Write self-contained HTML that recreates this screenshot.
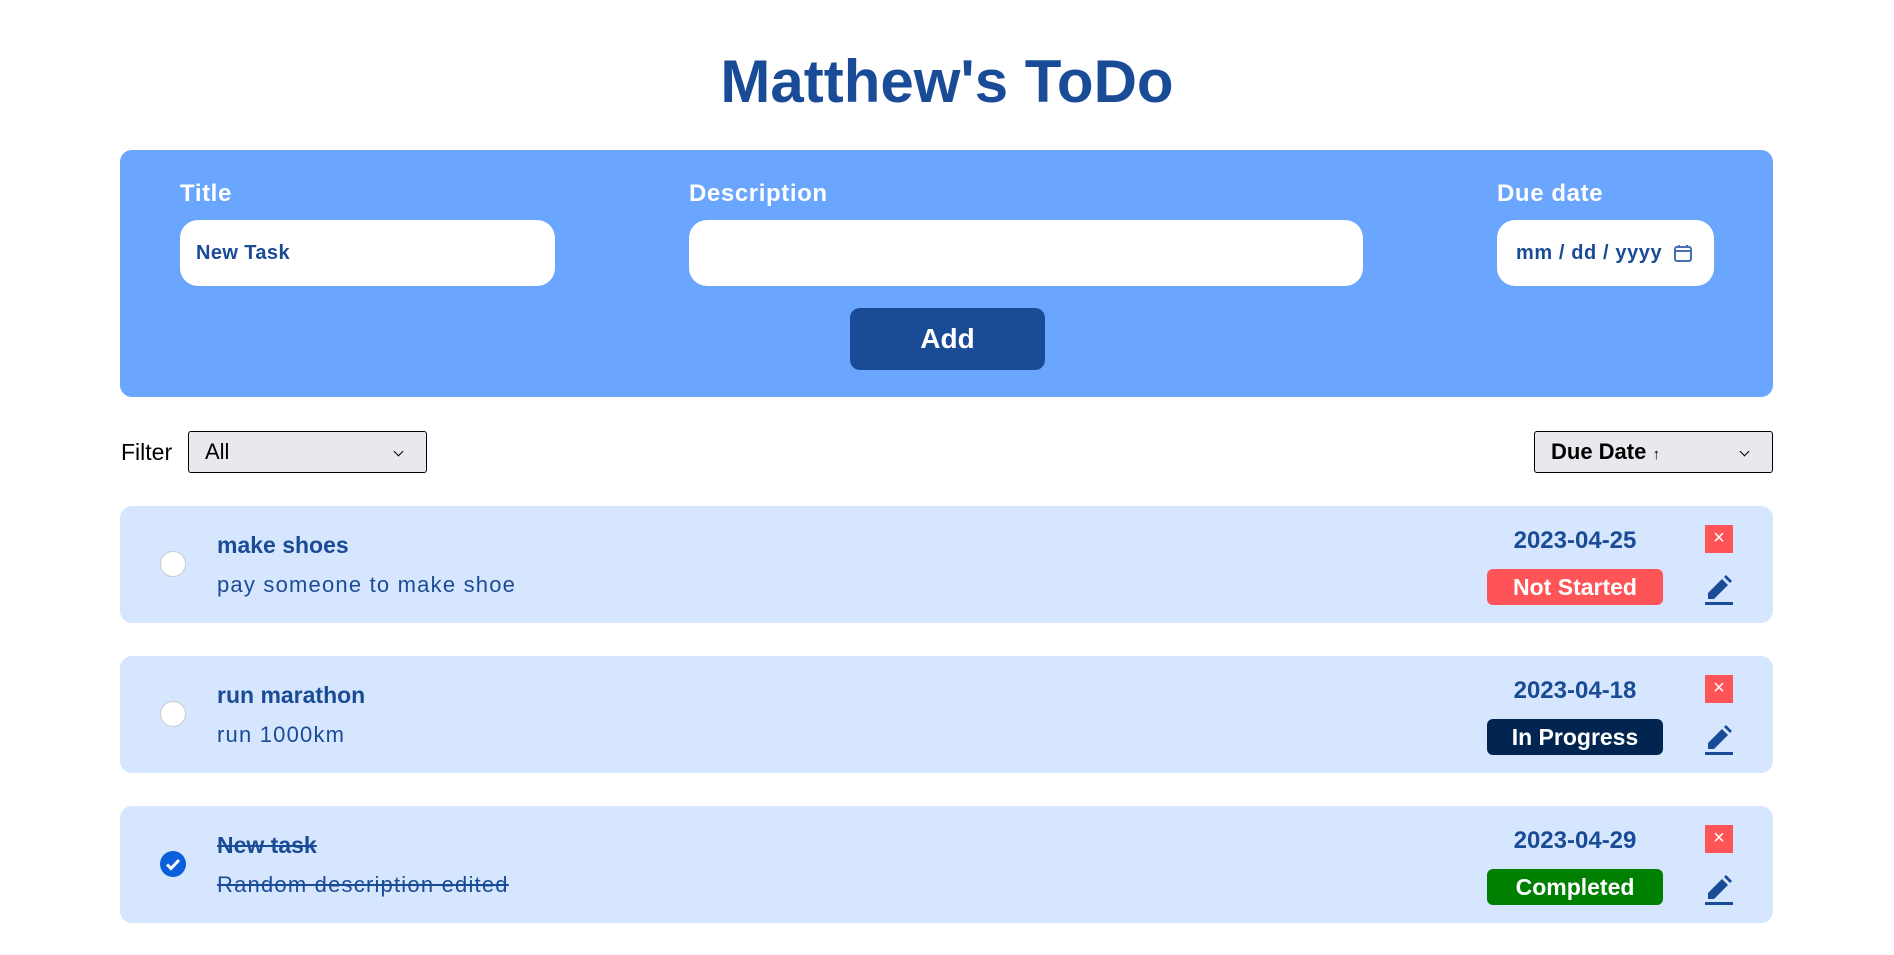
<!DOCTYPE html>
<html><head><meta charset="utf-8"><style>
*{box-sizing:border-box;margin:0;padding:0}
body{width:1894px;height:955px;background:#fff;font-family:"Liberation Sans",sans-serif;position:relative;overflow:hidden}
.abs{position:absolute}
h1{position:absolute;left:0;width:1894px;top:47px;text-align:center;font-size:60px;font-weight:bold;color:#1a4b96}
.panel{left:120px;top:150px;width:1653px;height:247px;background:#6aa5fe;border-radius:12px}
.lbl{color:#fff;font-weight:bold;font-size:24px;top:180px;letter-spacing:0.6px}
.inp{background:#fff;border-radius:18px;top:220px;height:66px;color:#1a4b96;font-size:20px;font-weight:bold;line-height:66px;padding-left:16px;letter-spacing:0.4px}
.btn{left:850px;top:308px;width:195px;height:62px;background:#1a4b96;border-radius:10px;color:#fff;font-size:28px;font-weight:bold;text-align:center;line-height:62px}
.sel{top:431px;height:42px;background:#e9e8ed;border:1px solid #000;border-radius:3px;font-size:22px;line-height:40px;padding-left:16px;color:#000}
.sel:after{content:"";position:absolute;right:24px;top:16px;width:6px;height:6px;border-right:1.5px solid #000;border-bottom:1.5px solid #000;transform:rotate(45deg)}
.card{left:120px;width:1653px;height:117px;background:#d6e6fe;border-radius:12px}
.chk{left:40px;top:45px;width:26px;height:26px;border-radius:50%;background:#fff;border:1px solid #ccc}
.t{left:97px;top:26px;font-size:23px;font-weight:bold;color:#1a4b96}
.d{left:97px;top:66px;font-size:22px;color:#1a4b96;letter-spacing:1.2px}
.date{left:1367px;width:176px;text-align:center;top:21px;font-size:24px;font-weight:bold;color:#1a4b96}
.badge{left:1367px;width:176px;top:63px;height:36px;border-radius:6px;color:#fff;font-size:23px;font-weight:bold;text-align:center;line-height:36px}
.x{left:1585px;top:19px;width:28px;height:28px;background:#ff5457;color:#fff;font-size:20px;text-align:center;line-height:27px}
.ed{left:1585px;top:69px}
.strike{text-decoration:line-through}
</style></head><body>
<h1>Matthew's ToDo</h1>
<div class="abs panel"></div>
<div class="abs lbl" style="left:180px">Title</div>
<div class="abs lbl" style="left:689px">Description</div>
<div class="abs lbl" style="left:1497px">Due date</div>
<div class="abs inp" style="left:180px;width:375px">New Task</div>
<div class="abs inp" style="left:689px;width:674px"></div>
<div class="abs inp" style="left:1497px;width:217px;padding-left:19px;letter-spacing:0.6px">mm / dd / yyyy
<svg class="abs" style="left:176px;top:23px" width="20" height="20" viewBox="0 0 20 20"><rect x="2" y="4" width="16" height="14" rx="2" fill="none" stroke="#4a6fae" stroke-width="2"/><line x1="2" y1="8" x2="18" y2="8" stroke="#4a6fae" stroke-width="2"/><line x1="6" y1="2" x2="6" y2="5" stroke="#4a6fae" stroke-width="2"/><line x1="14" y1="2" x2="14" y2="5" stroke="#4a6fae" stroke-width="2"/></svg></div>
<div class="abs btn">Add</div>
<div class="abs" style="left:121px;top:439px;font-size:23px">Filter</div>
<div class="abs sel" style="left:188px;width:239px">All</div>
<div class="abs sel" style="left:1534px;width:239px;font-weight:bold">Due Date <span style="font-size:15px">↑</span></div>

<div class="abs card" style="top:506px">
<div class="abs chk"></div><div class="abs t">make shoes</div><div class="abs d">pay someone to make shoe</div>
<div class="abs date">2023-04-25</div><div class="abs badge" style="background:#ff5457">Not Started</div>
<div class="abs x">×</div>
<svg class="abs ed" width="28" height="30" viewBox="0 0 28 30"><path d="M3 24 L3 18 L17 4 L23 10 L9 24 Z" fill="#1a4b96"/><path d="M19 2 L21 0 L27 6 L25 8 Z" fill="#1a4b96"/><rect x="0" y="27" width="28" height="3" fill="#1a4b96"/></svg>
</div>
<div class="abs card" style="top:656px">
<div class="abs chk"></div><div class="abs t">run marathon</div><div class="abs d">run 1000km</div>
<div class="abs date">2023-04-18</div><div class="abs badge" style="background:#022450">In Progress</div>
<div class="abs x">×</div>
<svg class="abs ed" width="28" height="30" viewBox="0 0 28 30"><path d="M3 24 L3 18 L17 4 L23 10 L9 24 Z" fill="#1a4b96"/><path d="M19 2 L21 0 L27 6 L25 8 Z" fill="#1a4b96"/><rect x="0" y="27" width="28" height="3" fill="#1a4b96"/></svg>
</div>
<div class="abs card" style="top:806px">
<svg class="abs" style="left:40px;top:45px" width="26" height="26" viewBox="0 0 26 26"><circle cx="13" cy="13" r="13" fill="#0b5fd9"/><path d="M7 13.5 L11 17.5 L19 9" fill="none" stroke="#fff" stroke-width="3"/></svg>
<div class="abs t strike">New task</div><div class="abs d strike">Random description edited</div>
<div class="abs date">2023-04-29</div><div class="abs badge" style="background:#008000">Completed</div>
<div class="abs x">×</div>
<svg class="abs ed" width="28" height="30" viewBox="0 0 28 30"><path d="M3 24 L3 18 L17 4 L23 10 L9 24 Z" fill="#1a4b96"/><path d="M19 2 L21 0 L27 6 L25 8 Z" fill="#1a4b96"/><rect x="0" y="27" width="28" height="3" fill="#1a4b96"/></svg>
</div>
</body></html>
